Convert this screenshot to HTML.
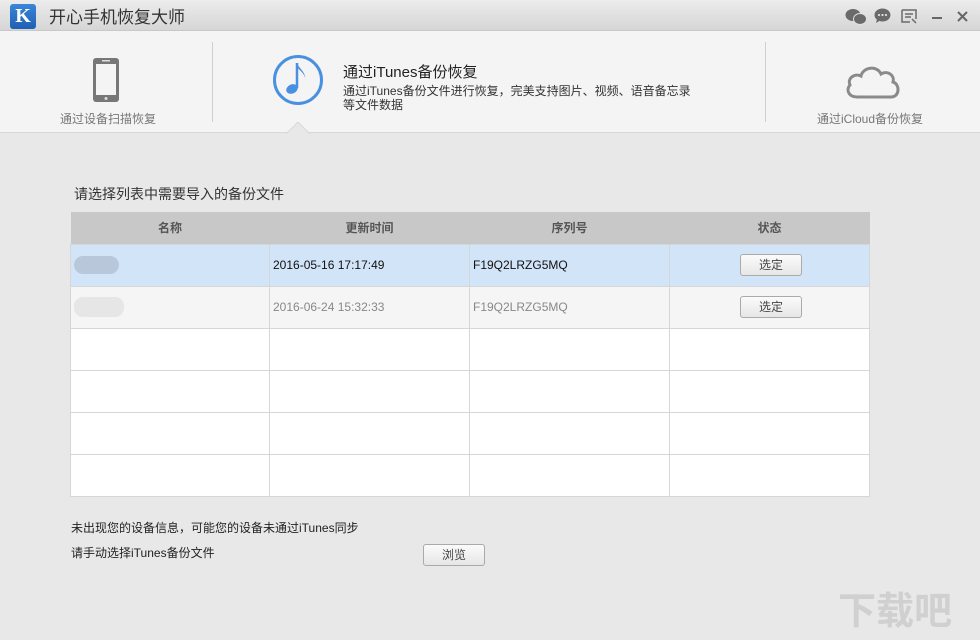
<!DOCTYPE html>
<html><head><meta charset="utf-8"><style>
*{margin:0;padding:0;box-sizing:border-box}
body{width:980px;height:640px;overflow:hidden;background:#e8e8e8;font-family:"Liberation Sans","Noto Sans CJK SC",sans-serif;position:relative}
.tb{position:absolute;left:0;top:0;width:980px;height:31px;background:linear-gradient(#ececec,#d6d6d6);border-bottom:1px solid #c8c8c8}
.logo{position:absolute;left:10px;top:4px;width:26px;height:25px;border-radius:3px;background:linear-gradient(#3a86d8,#1f5fb3);color:#fff;font:bold 20px "Liberation Serif",serif;text-align:center;line-height:25px}
.title{position:absolute;left:49px;top:3px;font-size:17px;color:#333}
.hd{position:absolute;left:0;top:31px;width:980px;height:102px;background:#f4f4f4;border-bottom:1px solid #d8d8d8}
.sep{position:absolute;top:42px;width:1px;height:80px;background:#cfcfcf}
.lbl{position:absolute;font-size:12px;color:#777}
.t{position:absolute;left:70px;top:212px;width:800px;border-collapse:collapse;font-size:12px}
.t th{height:32px;background:#c8c8c8;color:#555;font-weight:bold;font-size:12px;border:none}
.t td{height:42px;border:1px solid #d6d6d6;background:#fff;padding-left:3px}
.btn{display:inline-block;width:62px;height:22px;border:1px solid #aaa;border-radius:3px;background:linear-gradient(#fbfbfb,#e6e6e6);text-align:center;line-height:20px;font-size:12px;color:#444}
</style></head><body>
<div class="tb">
<div class="logo">K</div>
<div class="title">开心手机恢复大师</div>
<svg style="position:absolute;left:845px;top:8px" width="22" height="18"><ellipse cx="8" cy="7" rx="7.5" ry="6" fill="#6a6a6a"/><ellipse cx="15" cy="11" rx="6.5" ry="5.5" fill="#6a6a6a" stroke="#e0e0e0" stroke-width="1"/></svg>
<svg style="position:absolute;left:874px;top:8px" width="17" height="16"><ellipse cx="8.5" cy="7" rx="8" ry="6.5" fill="#6a6a6a"/><path d="M3 11 L2 15 L7 12Z" fill="#6a6a6a"/><circle cx="5" cy="7" r="1.1" fill="#e0e0e0"/><circle cx="8.5" cy="7" r="1.1" fill="#e0e0e0"/><circle cx="12" cy="7" r="1.1" fill="#e0e0e0"/></svg>
<svg style="position:absolute;left:901px;top:9px" width="17" height="15" fill="none" stroke="#6a6a6a" stroke-width="1.5"><path d="M1 1H15V10M1 1V13H9M4 5H12M4 8H10M11 10L15 14"/></svg>
<div style="position:absolute;left:932px;top:17px;width:10px;height:2px;background:#666"></div>
<svg style="position:absolute;left:957px;top:11px" width="11" height="11" stroke="#666" stroke-width="2"><path d="M1 1L10 10M10 1L1 10"/></svg>
</div>
<div class="hd">
<svg style="position:absolute;left:92px;top:26px" width="28" height="46"><rect x="1" y="1" width="26" height="44" rx="3" fill="#777"/><rect x="4" y="7" width="20" height="31" fill="#f4f4f4"/><rect x="10" y="3" width="8" height="1.5" fill="#ddd"/><circle cx="14" cy="41.5" r="1.5" fill="#ddd"/></svg>
<div class="lbl" style="left:60px;top:79px">通过设备扫描恢复</div>
<div class="sep" style="left:212px;top:11px"></div>
<svg style="position:absolute;left:272px;top:23px" width="52" height="52"><circle cx="26" cy="26" r="23.5" fill="none" stroke="#4a90e0" stroke-width="3"/><path d="M25 9V34" stroke="#4a90e0" stroke-width="2.5"/><ellipse cx="20" cy="35" rx="6" ry="4.5" fill="#4a90e0" transform="rotate(-25 20 35)"/><path d="M25 9C27 15 35 18 33 28C35 21 28 17 25 13Z" fill="#4a90e0"/></svg>
<div style="position:absolute;left:343px;top:30px;font-size:15px;color:#222">通过iTunes备份恢复</div>
<div style="position:absolute;left:343px;top:53px;font-size:12px;color:#333;line-height:14px;width:360px">通过iTunes备份文件进行恢复，完美支持图片、视频、语音备忘录<br>等文件数据</div>
<div class="sep" style="left:765px;top:11px"></div>
<svg style="position:absolute;left:843px;top:31px" width="60" height="38"><path d="M14 35C5 35 3 27 7 23C4 16 12 11 18 14C20 5 34 3 38 12C44 8 52 13 50 20C57 22 57 35 48 35Z" fill="none" stroke="#8a8a8a" stroke-width="3"/></svg>
<div class="lbl" style="left:817px;top:79px">通过iCloud备份恢复</div>
<svg style="position:absolute;left:286px;top:91px" width="24" height="12"><path d="M0 12L12 0L24 12" fill="#e8e8e8" stroke="#d8d8d8"/></svg>
</div>
<div style="position:absolute;left:74px;top:184px;font-size:14px;color:#333">请选择列表中需要导入的备份文件</div>
<table class="t">
<tr><th style="width:199px">名称</th><th style="width:200px">更新时间</th><th style="width:200px">序列号</th><th>状态</th></tr>
<tr><td style="background:#d2e4f8"><div style="width:45px;height:18px;border-radius:9px;background:#b8c8da"></div></td><td style="background:#d2e4f8;color:#111">2016-05-16 17:17:49</td><td style="background:#d2e4f8;color:#111">F19Q2LRZG5MQ</td><td style="background:#d2e4f8;text-align:center"><span class="btn">选定</span></td></tr>
<tr><td style="background:#f5f5f5"><div style="width:50px;height:20px;border-radius:9px;background:#e6e6e6"></div></td><td style="background:#f5f5f5;color:#888">2016-06-24 15:32:33</td><td style="background:#f5f5f5;color:#888">F19Q2LRZG5MQ</td><td style="background:#f5f5f5;text-align:center"><span class="btn">选定</span></td></tr>
<tr><td></td><td></td><td></td><td></td></tr>
<tr><td></td><td></td><td></td><td></td></tr>
<tr><td></td><td></td><td></td><td></td></tr>
<tr><td></td><td></td><td></td><td></td></tr>
</table>
<div style="position:absolute;left:71px;top:519px;font-size:12px;color:#222">未出现您的设备信息，可能您的设备未通过iTunes同步</div>
<div style="position:absolute;left:71px;top:544px;font-size:12px;color:#222">请手动选择iTunes备份文件</div>
<span class="btn" style="position:absolute;left:423px;top:544px;height:22px">浏览</span>
<div style="position:absolute;left:838px;top:580px;font-size:38px;color:#d0d0d0;font-weight:bold">下载吧</div>
</body></html>
